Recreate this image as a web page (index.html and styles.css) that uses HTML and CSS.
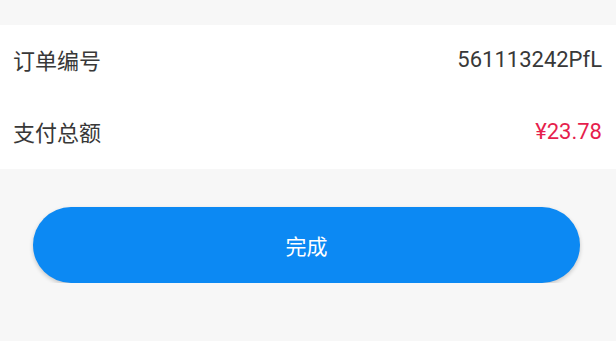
FILE: index.html
```html
<!DOCTYPE html>
<html lang="zh-CN">
<head>
    <meta charset="UTF-8">
    <meta name="viewport" content="width=device-width, initial-scale=1.0">
    <title>支付结果</title>
    <link rel="stylesheet" href="styles.css">
</head>
<body>
    <div class="info-list">
        <div class="info-row">
            <span class="info-label">订单编号</span>
            <span class="info-value">561113242PfL</span>
        </div>
        <div class="info-row">
            <span class="info-label">支付总额</span>
            <span class="info-value price">¥23.78</span>
        </div>
    </div>
    <div class="button-container">
        <button class="done-btn">完成</button>
    </div>
</body>
</html>
```

FILE: styles.css
```css
body {
    margin: 0;
    padding-top: 25px;
    background-color: #f7f7f7;
    font-family: Roboto, "Noto Sans CJK SC", sans-serif;
    color: #383838;
}

.info-list {
    background-color: #fff;
}

.info-row {
    display: flex;
    justify-content: space-between;
    align-items: center;
    box-sizing: border-box;
    height: 72px;
    padding: 0 14px 4px 13px;
    font-size: 22px;
}

.price {
    color: #e61e4d;
}

.button-container {
    padding: 38px 36px 0 33px;
}

.done-btn {
    display: block;
    width: 100%;
    height: 76px;
    border: none;
    border-radius: 38px;
    background-color: #0c89f3;
    color: #fff;
    font-family: Roboto, "Noto Sans CJK SC", sans-serif;
    font-size: 21px;
    box-shadow: 0 2px 4px rgba(0, 0, 0, 0.2);
    cursor: pointer;
}
```
